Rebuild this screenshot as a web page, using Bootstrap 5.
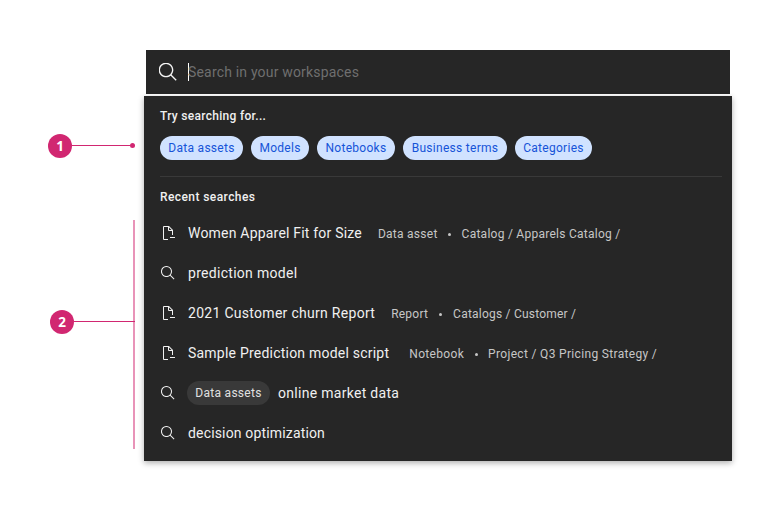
<!DOCTYPE html>
<html lang="en">
<head>
<meta charset="utf-8">
<meta name="viewport" content="width=device-width, initial-scale=1">
<title>Search suggestions</title>
<link href="https://cdn.jsdelivr.net/npm/bootstrap@5.3.0/dist/css/bootstrap.min.css" rel="stylesheet">
<style>
  body { font-family: Roboto, "Liberation Sans", sans-serif; font-size: 14px; line-height: 20px; letter-spacing: .2px; overflow: hidden; }
  .stage { width: 780px; height: 509px; padding-top: 50px; }

  /* Annotation column */
  .notes { width: 144px; padding: 84px 9px 0 48px; }
  .marker { width: 24px; height: 24px; background: #d12771; font: 700 13.500px/24px "Noto Sans", sans-serif; letter-spacing: 0; }
  .lead-line { height: 1px; background: #d12771; }
  .lead-dot { width: 5px; height: 5px; background: #d12771; }
  .first .lead-line, .first .lead-dot { margin-bottom: 1px; }
  .note-range { height: 229px; margin-top: 62px; padding-left: 2px; border-right: 2px solid #e893b8; }
  .note-range .marker { margin-top: -25px; }
  .note-range .lead-line { margin: -26px -2px 0 0; }

  /* Search field and panel */
  .search-ui { width: 588px; }
  .search-bar { height: 44px; margin: 0 2px; padding-left: 13px; background: #262626; color: #f4f4f4; }
  .search-bar .hint { color: #6f6f6f; letter-spacing: .18px; }
  .caret { width: 1px; height: 18px; margin: 0 -1px 0 11px; background: #fff; }
  .panel { height: 365px; margin-top: 2px; padding: 12px 10px 0 16px; background: #262626; color: #f0f0f0; box-shadow: 0 2px 6px rgba(0,0,0,.32); }
  .heading { font-size: 12px; line-height: 16px; font-weight: 500; letter-spacing: .3px; }
  .heading.recent-title { letter-spacing: .42px; }
  .chip { height: 24px; padding: 0 8px; font-size: 12px; line-height: 24px; letter-spacing: .28px; white-space: nowrap; }
  .chip-blue { background: #d0e2ff; color: #1654d8; }
  .chip-dark { background: #393939; color: #e0e0e0; margin-left: -1px; }
  .w-a { width: 83px; } .w-b { width: 58px; } .w-c { width: 78px; } .w-d { width: 104px; } .w-e { width: 77px; }
  .divider { height: 1px; background: #393939; margin: 16px 0 12px; }
  .recent { margin-top: 8px; }
  .recent li { height: 40px; white-space: nowrap; }
  .recent svg { width: 16px; height: 16px; margin-right: 12px; }
  .ls-wide { letter-spacing: .29px; }
  .ls-mid { letter-spacing: .22px; }
  .ls-tight { letter-spacing: .16px; }
  .meta { margin: 2px 0 0 16px; gap: 10.500px; font-size: 12px; color: #c6c6c6; letter-spacing: .26px; }
  .meta.mid { gap: 11px; letter-spacing: .22px; }
  .meta.far { margin-left: 20px; letter-spacing: .33px; }
  .sep { width: 3px; height: 3px; background: #c6c6c6; }
  svg { fill: currentColor; flex: none; }
</style>
</head>
<body class="bg-white">
<svg class="d-none">
  <symbol id="i-search" viewBox="0 0 32 32"><path d="M29 27.586l-7.552-7.552a11.018 11.018 0 1 0-1.414 1.414L27.586 29zM4 13a9 9 0 1 1 9 9 9.01 9.01 0 0 1-9-9z"/></symbol>
  <symbol id="i-asset" viewBox="0 0 16 16"><path d="M8 14v1H4a1 1 0 0 1-1-1V2a1 1 0 0 1 1-1h5l4 4v5h-1V6H9a1 1 0 0 1-1-1V2H4v12zM9 2.400V5h2.600zM10 12h5v1h-5z"/></symbol>
</svg>
<div class="stage d-flex">
  <aside class="notes">
    <div class="first d-flex align-items-center">
      <span class="marker rounded-circle text-white text-center">1</span>
      <span class="lead-line flex-grow-1"></span>
      <span class="lead-dot rounded-circle"></span>
    </div>
    <div class="note-range d-flex align-items-center">
      <span class="marker rounded-circle text-white text-center">2</span>
      <span class="lead-line flex-grow-1"></span>
    </div>
  </aside>
  <main class="search-ui">
    <div class="search-bar d-flex align-items-center">
      <svg width="18" height="18" viewBox="2.500 2.500 27 27"><use href="#i-search" width="32" height="32"/></svg>
      <span class="caret"></span><span class="hint">Search in your workspaces</span>
    </div>
    <section class="panel">
      <div class="heading">Try searching for...</div>
      <div class="d-flex gap-2 mt-2 pt-1 text-center">
        <span class="chip chip-blue rounded-pill w-a">Data assets</span>
        <span class="chip chip-blue rounded-pill w-b">Models</span>
        <span class="chip chip-blue rounded-pill w-c">Notebooks</span>
        <span class="chip chip-blue rounded-pill w-d">Business terms</span>
        <span class="chip chip-blue rounded-pill w-e">Categories</span>
      </div>
      <div class="divider"></div>
      <div class="heading recent-title">Recent searches</div>
      <ul class="recent list-unstyled mb-0">
        <li class="d-flex align-items-center"><svg><use href="#i-asset"/></svg><span>Women Apparel Fit for Size</span>
          <span class="meta d-flex align-items-center"><span>Data asset</span><i class="sep rounded-circle"></i><span>Catalog / Apparels Catalog /</span></span></li>
        <li class="d-flex align-items-center"><svg><use href="#i-search"/></svg><span class="ls-wide">prediction model</span></li>
        <li class="d-flex align-items-center"><svg><use href="#i-asset"/></svg><span class="ls-wide">2021 Customer churn Report</span>
          <span class="meta mid d-flex align-items-center"><span>Report</span><i class="sep rounded-circle"></i><span>Catalogs / Customer /</span></span></li>
        <li class="d-flex align-items-center"><svg><use href="#i-asset"/></svg><span class="ls-mid">Sample Prediction model script</span>
          <span class="meta far d-flex align-items-center"><span>Notebook</span><i class="sep rounded-circle"></i><span>Project / Q3 Pricing Strategy /</span></span></li>
        <li class="d-flex align-items-center"><svg><use href="#i-search"/></svg><span class="chip chip-dark rounded-pill w-a text-center me-2">Data assets</span><span class="ls-wide">online market data</span></li>
        <li class="d-flex align-items-center"><svg><use href="#i-search"/></svg><span class="ls-tight">decision optimization</span></li>
      </ul>
    </section>
  </main>
</div>
</body>
</html>
